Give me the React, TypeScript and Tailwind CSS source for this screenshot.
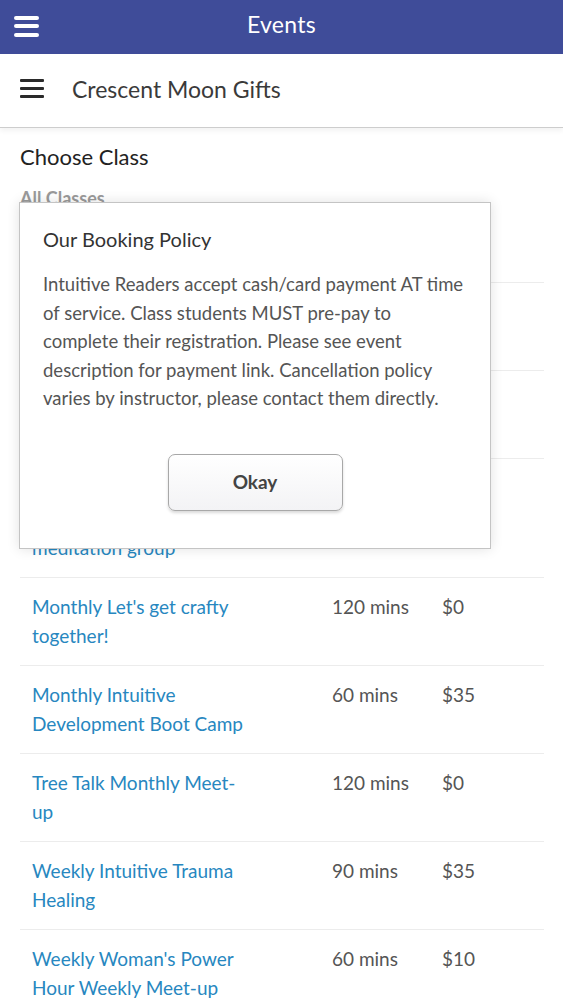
import React from "react";

type Row = { title: string; mins: string; price: string; tall?: boolean };

const rows: Row[] = [
  { title: "Monthly Psychic Fair", mins: "240 mins", price: "$0" },
  { title: "Monthly Full Moon Ceremony & Circle", mins: "90 mins", price: "$20" },
  { title: "Monthly New Moon Intention Setting", mins: "90 mins", price: "$20" },
  { title: "Weekly Guided Group Chakra Healing meditation group", mins: "60 mins", price: "$15", tall: true },
  { title: "Monthly Let's get crafty together!", mins: "120 mins", price: "$0" },
  { title: "Monthly Intuitive Development Boot Camp", mins: "60 mins", price: "$35" },
  { title: "Tree Talk Monthly Meet-up", mins: "120 mins", price: "$0" },
  { title: "Weekly Intuitive Trauma Healing", mins: "90 mins", price: "$35" },
  { title: "Weekly Woman's Power Hour Weekly Meet-up", mins: "60 mins", price: "$10" },
];

export default function App() {
  return (
    <div className="relative w-[563px] min-h-[1000px] overflow-hidden bg-white font-['Lato','Noto_Sans',sans-serif]">
      {/* Top bar */}
      <div className="relative flex h-[54px] items-center bg-[#3f4c99]">
        <div className="ml-[14px] flex w-[25px] -translate-y-[1px] flex-col gap-[4.5px]">
          <div className="h-[4px] rounded-[2px] bg-white" />
          <div className="h-[4px] rounded-[2px] bg-white" />
          <div className="h-[4px] rounded-[2px] bg-white" />
        </div>
        <div className="absolute inset-x-0 top-0 flex h-[48px] items-center justify-center text-[23px] tracking-[0.3px] text-white">
          Events
        </div>
      </div>

      {/* Store header */}
      <div className="flex h-[74px] items-center border-b border-[#cdcdcd] pb-[4px] shadow-[0_3px_5px_rgba(0,0,0,0.05)]">
        <div className="ml-[20px] flex w-[24px] flex-col gap-[5px]">
          <div className="h-[3px] rounded-[1px] bg-[#2a2a2a]" />
          <div className="h-[3px] rounded-[1px] bg-[#2a2a2a]" />
          <div className="h-[3px] rounded-[1px] bg-[#2a2a2a]" />
        </div>
        <div className="ml-[28px] text-[23px] leading-[28px] text-[#3a3a3a]">Crescent Moon Gifts</div>
      </div>

      {/* Content */}
      <div className="px-[20px] pr-[19px]">
        <h2 className="pt-[15px] text-[22px] leading-[28px] text-[#222]">Choose Class</h2>
        <div className="mt-[15px] pb-[13px] text-[18px] font-bold leading-[24px] text-[#9a9a9a]">All Classes</div>
        <div>
          {rows.map((r, i) => (
            <div
              key={i}
              className={
                r.tall
                  ? "flex border-b border-[#ececec] pb-[15px] pt-[18px] text-[19px] leading-[28.5px]"
                  : "flex border-b border-[#ececec] py-[15px] text-[19px] leading-[28.5px]"
              }
            >
              <div className="w-[312px] pl-[12px]">
                <span className="block max-w-[212px] text-[#2787c0]">{r.title}</span>
              </div>
              <div className="w-[110px] text-[#555]">{r.mins}</div>
              <div className="text-[#555]">{r.price}</div>
            </div>
          ))}
        </div>
      </div>

      {/* Dialog */}
      <div className="absolute left-[19px] top-[202px] flex h-[347px] w-[472px] flex-col border border-[#c4c4c4] bg-white px-[23px] pt-[23px] shadow-[0_0_12px_rgba(0,0,0,0.12)]">
        <div className="text-[20px] leading-[26px] text-[#333]">Our Booking Policy</div>
        <p className="mt-[18px] whitespace-nowrap text-[18.5px] leading-[28.5px] text-[#555]">
          Intuitive Readers accept cash/card payment AT time
          <br />
          of service. Class students MUST pre-pay to
          <br />
          complete their registration. Please see event
          <br />
          description for payment link. Cancellation policy
          <br />
          varies by instructor, please contact them directly.
        </p>
        <div className="mt-[41px] flex justify-center">
          <button className="flex h-[57px] w-[175px] items-center justify-center rounded-[7px] border border-[#a8a8a8] bg-gradient-to-b from-white to-[#f3f3f5] text-[19px] font-bold text-[#444] shadow-[0_2px_3px_rgba(0,0,0,0.15)]">
            Okay
          </button>
        </div>
      </div>
    </div>
  );
}
